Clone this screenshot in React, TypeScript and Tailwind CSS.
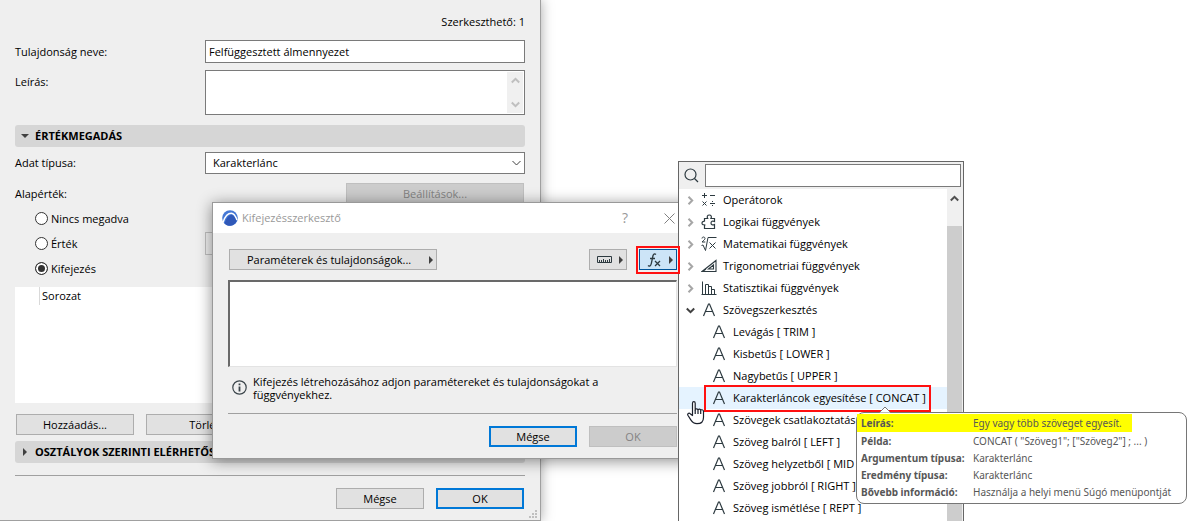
import { useState } from "react";
import type { ReactNode } from "react";
import clsx from "clsx";

type IconProps = { className?: string };

/* ---------- icons ---------- */

function OperatorsIcon() {
  return (
    <svg width="16" height="16" viewBox="0 0 16 16" fill="none" stroke="#2d3a40">
      <path d="M1 3.5h5M3.5 1v5M9 3.5h5M1.5 9.5l4 4M5.5 9.5l-4 4M9 11.5h5" />
      <path d="M11 9.5h1M11 13.5h1" />
    </svg>
  );
}

function PuzzleIcon() {
  return (
    <svg width="16" height="16" viewBox="0 0 16 16" fill="none" stroke="#2d3a40" strokeWidth="1.2">
      <path d="M3.500 7.500v-3h3.200C5.500 2.500 6.600 1 8.300 1s2.800 1.500 1.600 3.500h3.600v3c-2-1-3.500-.2-3.500 1.500s1.500 2.500 3.500 1.500v4h-10v-3.500h1M3.500 7.500C1.800 7 1 8 1 9.200s1 2 2.500 1.300" />
    </svg>
  );
}

function RootIcon() {
  return (
    <svg width="16" height="16" viewBox="0 0 16 16" fill="none" stroke="#2d3a40">
      <path d="M0.500 9.500l1.500-.5 2.500 5.500 2.500-13H15.500" />
      <path d="M8.500 6.500l6 6M14.500 6.500l-6 6M1 2.500c0-2 3-2 3 0 0 1-1.500 2-3 3.500h3.300" />
    </svg>
  );
}

function TriangleIcon() {
  return (
    <svg width="16" height="16" viewBox="0 0 16 16" fill="none" stroke="#2d3a40" strokeWidth="1.100">
      <path d="M15 2.500v11H1zM12.500 7v4H7.500zM3 12.500l2-1.500" />
    </svg>
  );
}

function StatsIcon() {
  return (
    <svg width="16" height="16" viewBox="0 0 16 16" fill="none" stroke="#2d3a40">
      <path d="M.5 14.500h15M1.500 14.500v-13M4.500 14.500v-10h3v10M7.500 6.500h3v8M10.500 9.500h3v5" />
    </svg>
  );
}

function LetterIcon() {
  return (
    <svg width="14" height="16" viewBox="0 0 14 16" fill="none" stroke="#2d3a40" strokeWidth="1.200">
      <path d="M1.500 14L6.500 2h1l5 12M3.500 9.500h7" />
    </svg>
  );
}

function SearchIcon() {
  return (
    <svg width="15" height="15" viewBox="0 0 15 15" fill="none" stroke="#2d3a40" strokeWidth="1.200">
      <circle cx="6.500" cy="6.500" r="5.500" />
      <path d="M10.500 10.500l3.500 3.500" />
    </svg>
  );
}

function Chevron({ className }: IconProps) {
  return (
    <svg width="9" height="9" viewBox="0 0 9 9" fill="none" stroke="currentColor" strokeWidth="2" className={className}>
      <path d="M2.500 .8l3.700 3.700-3.700 3.700" />
    </svg>
  );
}

function Arrow({ className }: IconProps) {
  return (
    <svg width="4" height="8" viewBox="0 0 4 8" fill="#404040" className={className}>
      <path d="M0 0l4 4-4 4z" />
    </svg>
  );
}

function RulerIcon() {
  return (
    <svg width="15" height="7" viewBox="0 0 15 7" fill="none" stroke="#2d3a40">
      <path d="M.5.5h14v6H.5zM2.500 6V4M4.500 6V4M6.500 6V3M8.500 6V4M10.500 6V4M12.500 6V3" />
    </svg>
  );
}

function FxIcon() {
  return (
    <svg width="14" height="14" viewBox="0 0 14 14" fill="none" stroke="#2d3a40" strokeWidth="1.300">
      <path d="M9 1.500C7.500.3 6.300 1 5.900 3L4.300 10.500C3.900 12.800 2.300 13.700 1 12.600M3 5.500h5" />
      <path d="M8 8l5 5M13 8l-5 5" />
    </svg>
  );
}

function InfoIcon() {
  return (
    <svg width="15" height="15" viewBox="0 0 15 15" fill="none" stroke="#3a444a">
      <circle cx="7.500" cy="7.500" r="6.700" strokeWidth="1.200" />
      <path d="M7.500 6.500v5M7.500 3.500v1.800" strokeWidth="1.800" />
    </svg>
  );
}

function AppLogo() {
  return (
    <svg width="16" height="16" viewBox="0 0 16 16">
      <circle cx="8" cy="8" r="7.800" fill="#4478d6" />
      <path d="M1.200 12C3 6.500 5.800 3.300 9.300 3.300c2.700 0 4.100 2.500 5.600 6.700" fill="none" stroke="#fff" strokeWidth="1.500" />
      <path d="M2.500 13.500C4.500 8 6.800 5 9.200 5c2.500 0 3.900 2.500 5.300 6.500-1.300 2.600-3.700 4.300-6.500 4.300-2.200 0-4.200-.9-5.500-2.300z" fill="#2f58b8" />
    </svg>
  );
}

function HandCursor() {
  return (
    <svg width="18" height="24" viewBox="0 0 18 24" fill="#fff" stroke="#1a1f2b" strokeWidth="1.200" strokeLinejoin="round">
      <path d="M5.500 14.500V2.200c0-2 2.700-2 2.700 0V9c0-1.600 2.800-1.500 2.800.2 0-1.500 2.700-1.300 2.700.4 0-1.300 2.800-1.200 2.800.8v5.800c0 4.500-2.500 6.500-6.500 6.500-3 0-4.600-1.200-6.200-3.800L.9 14.300c-.8-1.600 1-2.900 2.300-1.600z" />
      <path d="M8.200 9v4M11 9.500V13M13.700 10v3" fill="none" />
    </svg>
  );
}

/* ---------- shared controls ---------- */

type PushButtonProps = {
  children: ReactNode;
  className?: string;
  primary?: boolean;
  disabled?: boolean;
};

function PushButton({ children, className, primary, disabled }: PushButtonProps) {
  return (
    <button
      type="button"
      disabled={disabled}
      className={clsx(
        "flex h-[21px] items-center justify-center",
        primary ? "border-2 border-[#0078d7]" : "border",
        !primary && (disabled ? "border-[#bfbfbf]" : "border-[#adadad]"),
        disabled ? "bg-[#cccccc] text-[#838383]" : "bg-[#e1e1e1]",
        className ?? "w-[88px]"
      )}
    >
      {children}
    </button>
  );
}

function SectionBar({ title, open }: { title: string; open?: boolean }) {
  return (
    <button
      type="button"
      aria-expanded={!!open}
      className="flex h-[22px] w-full items-center rounded-[3px] bg-[#d6d6d6] text-left font-bold whitespace-nowrap"
    >
      <span className="flex w-5 justify-center">
        <Arrow className={open ? "rotate-90" : ""} />
      </span>
      {title}
    </button>
  );
}

/* ---------- property window ---------- */

const valueModes = ["Nincs megadva", "Érték", "Kifejezés"];

function PropertyWindow() {
  const [mode, setMode] = useState("Kifejezés");

  return (
    <main className="w-[541px] border-r border-b border-[#a0a0a0] bg-[#efefef] pt-4 pr-[15px] pb-[11px] pl-[15px] shadow-[0_0_12px_rgba(0,0,0,0.35)]">
      <p className="h-6 text-right leading-3">Szerkeszthető: 1</p>

      <div className="flex items-center">
        <label htmlFor="prop-name" className="w-[190px]">Tulajdonság neve:</label>
        <input
          id="prop-name"
          defaultValue="Felfüggesztett álmennyezet"
          className="h-[23px] min-w-0 flex-1 border border-[#7a7a7a] bg-white px-[3px] outline-none"
        />
      </div>

      <div className="mt-[7px] flex">
        <label htmlFor="prop-desc" className="w-[190px] pt-1">Leírás:</label>
        <div className="flex h-[45px] flex-1 border border-[#7a7a7a] bg-white p-px">
          <textarea id="prop-desc" className="flex-1 resize-none outline-none" />
          <span className="flex w-4 flex-col items-center justify-between bg-[#f0f0f0] py-1 text-[#bfbfbf]">
            <Chevron className="-rotate-90" />
            <Chevron className="rotate-90" />
          </span>
        </div>
      </div>

      <div className="mt-[10px]">
        <SectionBar title="ÉRTÉKMEGADÁS" open />
      </div>

      <div className="mt-[5px] flex items-center">
        <label htmlFor="prop-type" className="w-[190px]">Adat típusa:</label>
        <div className="relative flex-1">
          <select id="prop-type" className="block h-[22px] w-full appearance-none border border-[#7a7a7a] bg-white px-[7px] outline-none">
            <option>Karakterlánc</option>
          </select>
          <svg width="9" height="6" viewBox="0 0 9 6" fill="none" stroke="#404040" className="pointer-events-none absolute top-2 right-1">
            <path d="M.5 1l4 4 4-4" />
          </svg>
        </div>
      </div>

      <div className="mt-[9px] flex items-center justify-between pr-px">
        <span id="default-label">Alapérték:</span>
        <PushButton disabled className="w-[178px]">Beállítások...</PushButton>
      </div>

      <div role="radiogroup" aria-labelledby="default-label" className="mt-[2px] pl-5">
        {valueModes.map((m) => (
          <div key={m} className="flex h-[25px] items-center">
            <label className="flex w-[170px] items-center gap-[3px]">
              <input
                type="radio"
                name="value-mode"
                checked={mode === m}
                onChange={() => setMode(m)}
                className="size-[13px] appearance-none rounded-full border border-[#333333] bg-white checked:bg-[#333333] checked:shadow-[inset_0_0_0_2px_white]"
              />
              {m}
            </label>
            {m === "Érték" && (
              <input aria-label="Érték" disabled className="h-[23px] min-w-0 flex-1 border border-[#bfbfbf]" />
            )}
          </div>
        ))}
      </div>

      <div className="mt-[6px] h-[116px] bg-white pl-6">
        <div className="flex h-[18px] items-center border-l border-[#d9d9d9] pl-[2px]">Sorozat</div>
      </div>

      <div className="mt-[11px] mb-[6px] flex gap-3 pl-px">
        <PushButton className="w-[118px]">Hozzáadás...</PushButton>
        <PushButton className="w-[118px]">Törlés</PushButton>
      </div>

      <SectionBar title="OSZTÁLYOK SZERINTI ELÉRHETŐSÉG" />

      <div className="mt-3 flex justify-end gap-3 border-t border-[#a0a0a0] pt-3 pr-px">
        <PushButton>Mégse</PushButton>
        <PushButton primary>OK</PushButton>
      </div>

      <svg width="8" height="8" viewBox="0 0 8 8" fill="#bfbfbf" className="absolute top-[510px] left-[529px]">
        <path d="M6 0h2v2H6zM3 3h2v2H3zM6 3h2v2H6zM0 6h2v2H0zM3 6h2v2H3zM6 6h2v2H6z" />
      </svg>
    </main>
  );
}

/* ---------- expression editor ---------- */

function ExpressionDialog() {
  return (
    <section
      role="dialog"
      aria-label="Kifejezésszerkesztő"
      className="absolute top-[202px] left-[212px] w-[481px] border border-[#999999] bg-[#efefef] shadow-[0_2px_14px_rgba(0,0,0,0.45)]"
    >
      <header className="flex h-[30px] items-center bg-white pr-[17px] pl-[9px] text-[#999999]">
        <AppLogo />
        <h2 className="ml-1 flex-1">Kifejezésszerkesztő</h2>
        <button type="button" aria-label="Súgó" className="mr-9 text-[14px]">?</button>
        <button type="button" aria-label="Bezárás">
          <svg width="11" height="11" viewBox="0 0 11 11" stroke="#808080">
            <path d="M.5.5l10 10M10.500.5l-10 10" />
          </svg>
        </button>
      </header>

      <div className="px-[15px] pt-4 pb-[11px]">
        <div className="flex items-center pl-px">
          <button type="button" className="flex h-[21px] w-[208px] items-center border border-[#adadad] bg-[#e1e1e1] pr-[3px] pl-[17px]">
            <span className="flex-1 text-left">Paraméterek és tulajdonságok...</span>
            <Arrow />
          </button>
          <button type="button" aria-label="Mértékegységek" className="ml-auto flex h-[21px] w-[38px] items-center justify-between border border-[#adadad] bg-[#e1e1e1] pr-[3px] pl-[7px]">
            <RulerIcon />
            <Arrow />
          </button>
          <button type="button" aria-label="Függvények" className="ml-3 flex h-[21px] w-[38px] items-center justify-between border border-[#005499] bg-[#cce4f7] pr-[3px] pl-[7px]">
            <FxIcon />
            <Arrow />
          </button>
        </div>

        <textarea
          aria-label="Kifejezés"
          className="mt-[10px] block h-[87px] w-full resize-none border border-t-2 border-l-2 border-[#e3e3e3] border-t-[#696969] border-l-[#696969] bg-white outline-none"
        />

        <div className="flex gap-[6px] pt-2 pl-1">
          <span className="pt-[5px]">
            <InfoIcon />
          </span>
          <p className="max-w-[370px] leading-[13px]">
            Kifejezés létrehozásához adjon paramétereket és tulajdonságokat a függvényekhez.
          </p>
        </div>

        <div className="mt-3 flex justify-end gap-3 border-t border-[#a0a0a0] pt-3">
          <PushButton primary>Mégse</PushButton>
          <PushButton disabled>OK</PushButton>
        </div>
      </div>
    </section>
  );
}

/* ---------- function picker ---------- */

const groups = [
  { label: "Operátorok", icon: OperatorsIcon },
  { label: "Logikai függvények", icon: PuzzleIcon },
  { label: "Matematikai függvények", icon: RootIcon },
  { label: "Trigonometriai függvények", icon: TriangleIcon },
  { label: "Statisztikai függvények", icon: StatsIcon },
  { label: "Szövegszerkesztés", icon: LetterIcon, open: true },
];

const textFunctions = [
  "Levágás [ TRIM ]",
  "Kisbetűs [ LOWER ]",
  "Nagybetűs [ UPPER ]",
  "Karakterláncok egyesítése [ CONCAT ]",
  "Szövegek csatlakoztatás",
  "Szöveg balról [ LEFT ]",
  "Szöveg helyzetből [ MID ]",
  "Szöveg jobbról [ RIGHT ]",
  "Szöveg ismétlése [ REPT ]",
];

function FunctionPicker() {
  return (
    <section className="absolute top-[161px] bottom-0 left-[678px] flex w-[286px] flex-col overflow-hidden border border-b-0 border-[#666666] bg-[#efefef]">
      <div className="flex h-[27px] shrink-0 items-center gap-[6px] pr-[2px] pl-[5px]">
        <SearchIcon />
        <input aria-label="Keresés" className="h-[23px] min-w-0 flex-1 border border-[#7a7a7a] bg-white px-1 outline-none" />
      </div>
      <div className="flex min-h-0 flex-1 pr-px">
        <ul className="flex-1 bg-white">
          {groups.map(({ label, icon: Icon, open }) => (
            <li key={label}>
              <button type="button" aria-expanded={!!open} className="flex h-[22px] w-full items-center pl-[7px] text-left">
                <Chevron className={open ? "rotate-90 text-[#404040]" : "text-[#a6a6a6]"} />
                <span className="mx-[6px] flex w-4 justify-center">
                  <Icon />
                </span>
                {label}
              </button>
            </li>
          ))}
          {textFunctions.map((label) => (
            <li key={label}>
              <button
                type="button"
                className={clsx(
                  "flex h-[22px] w-full items-center gap-[7px] pl-[33px] text-left",
                  label.includes("CONCAT") && "bg-[#e5f3ff]"
                )}
              >
                <LetterIcon />
                {label}
              </button>
            </li>
          ))}
        </ul>
        <div className="flex w-[15px] flex-col bg-[#f0f0f0]">
          <span className="flex h-[37px] shrink-0 justify-center pt-[5px] text-[#505050]">
            <Chevron className="-rotate-90" />
          </span>
          <span className="flex-1 bg-[#cdcdcd]" />
        </div>
      </div>
    </section>
  );
}

/* ---------- hint ---------- */

const hintRows = [
  ["Leírás:", "Egy vagy több szöveget egyesít."],
  ["Példa:", "CONCAT ( \"Szöveg1\"; [\"Szöveg2\"] ; ... )"],
  ["Argumentum típusa:", "Karakterlánc"],
  ["Eredmény típusa:", "Karakterlánc"],
  ["Bővebb információ:", "Használja a helyi menü Súgó menüpontját"],
];

function Hint() {
  return (
    <div role="tooltip" className="absolute top-[412px] left-[856px] w-[331px] rounded-lg border border-[#767676] bg-white pt-px pb-[3px] font-['Noto_Sans','Open_Sans',sans-serif] text-[10px] text-[#575757]">
      <svg width="12" height="7" viewBox="0 0 12 7" fill="#fff" stroke="#767676" className="absolute -top-[7px] left-[22px]">
        <path d="M.5 6.500L6 1l5.500 5.500" />
      </svg>
      <dl>
        {hintRows.map(([term, text], i) => (
          <div key={term} className={clsx("flex items-center pl-1 whitespace-nowrap", i === 0 ? "h-[18px] w-[275px] bg-[#ffff00]" : "h-[17px]")}>
            <dt className="w-[112px] shrink-0 font-bold">{term}</dt>
            <dd>{text}</dd>
          </div>
        ))}
      </dl>
    </div>
  );
}

export default function App() {
  return (
    <div className="relative min-h-screen overflow-hidden bg-white font-['Open_Sans','Noto_Sans',sans-serif] text-[11px] leading-4 text-black">
      <PropertyWindow />
      <ExpressionDialog />
      <FunctionPicker />
      <span className="pointer-events-none absolute top-[246px] left-[636px] h-[28px] w-[44px] border-2 border-[#ff1010]" />
      <span className="pointer-events-none absolute top-[385px] left-[704px] h-[27px] w-[227px] border-2 border-[#ff1010]" />
      <Hint />
      <span className="pointer-events-none absolute top-[401px] left-[687px]">
        <HandCursor />
      </span>
    </div>
  );
}
